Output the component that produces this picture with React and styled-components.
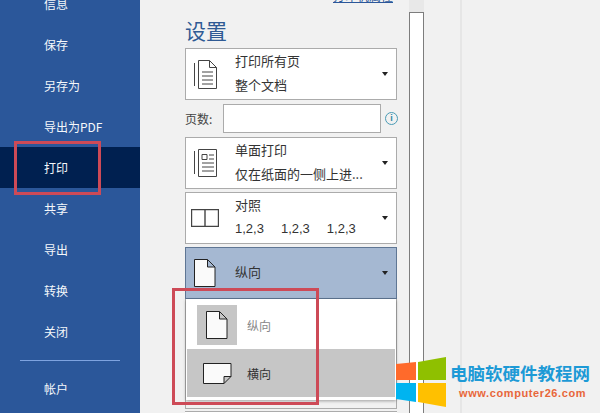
import React from "react";
import styled, { createGlobalStyle } from "styled-components";

const Global = createGlobalStyle`
  html, body { margin: 0; padding: 0; }
  body { width: 600px; height: 413px; overflow: hidden; background: #f1f1f1; }
  * { box-sizing: border-box; }
`;

const Page = styled.div`
  position: relative;
  display: flex;
  width: 600px;
  height: 413px;
  overflow: hidden;
  font-family: "Noto Sans CJK SC", "Liberation Sans", sans-serif;
`;

const Sidebar = styled.nav`
  width: 140px;
  margin-top: -17px;
  flex-shrink: 0;
  height: 430px;
  background: #2b579a;
  color: #f4f7fb;
`;

const NavItem = styled.div`
  height: 41px;
  padding-left: 44px;
  display: flex;
  align-items: center;
  font-size: 12px;
  background: ${(p) => (p.$active ? "#002050" : "transparent")};
`;

const NavDivider = styled.div`
  height: 1px;
  background: #7ea3e0;
  margin: 8px 20px 7px;
`;

const Settings = styled.section`
  width: 271px;
  padding: 17px 0 0 45px;
  flex-shrink: 0;
`;

const Heading = styled.h2`
  margin: 0 0 5px;
  font-size: 21px;
  line-height: 26px;
  font-weight: 400;
  color: #2f5a94;
`;

const Select = styled.div`
  width: 212px;
  height: 52px;
  margin-bottom: 3px;
  display: flex;
  align-items: center;
  border: 1px solid #ababab;
  background: ${(p) => (p.$open ? "#a5b8d2" : "#fff")};
  border-color: ${(p) => (p.$open ? "#5f7694" : "#ababab")};
`;

const IconSlot = styled.div`
  width: 38px;
  margin-right: 11px;
  display: flex;
  justify-content: center;
  flex-shrink: 0;
`;

const SelectText = styled.div`
  flex: 1;
  padding-bottom: 3px;
  font-size: 13px;
  line-height: 24px;
  color: #333;
`;

const Numbers = styled.div`
  display: flex;
  gap: 17px;
  font-family: "Liberation Sans", sans-serif;
`;

const Caret = styled.div`
  width: 0;
  height: 0;
  margin-right: 8px;
  border-left: 3.5px solid transparent;
  border-right: 3.5px solid transparent;
  border-top: 4px solid #222;
`;

const PagesRow = styled.div`
  height: 30px;
  padding-top: 1px;
  margin-bottom: 4px;
  display: flex;
  align-items: center;
  font-size: 12px;
  color: #444;
`;

const PagesLabel = styled.span`
  width: 38px;
`;

const PagesInput = styled.div`
  width: 158px;
  height: 29px;
  background: #fff;
  border: 1px solid #ababab;
`;

const InfoIcon = styled.div`
  width: 13px;
  height: 13px;
  margin-left: 4px;
  border: 1px solid #4a9bb5;
  border-radius: 50%;
  color: #2f86a5;
  font: 700 9px/11px "Liberation Sans", sans-serif;
  text-align: center;
`;

const BehindSelect = styled.div`
  position: absolute;
  left: 185px;
  top: 299px;
  width: 212px;
  height: 110px;
  border: 1px solid #ababab;
`;

const Menu = styled.div`
  position: absolute;
  left: 186px;
  top: 299px;
  width: 210px;
  height: 101px;
  padding: 0 1px;
  background: #fff;
  box-shadow: 0 1px 3px rgba(0, 0, 0, 0.35);
`;

const MenuRow = styled.div`
  height: ${(p) => (p.$selected ? "50px" : "48px")};
  padding-top: ${(p) => (p.$selected ? "2px" : "0")};
  display: flex;
  align-items: center;
  font-size: 12px;
  color: ${(p) => (p.$selected ? "#888" : "#333")};
  background: ${(p) => (p.$hover ? "#c6c6c6" : "#fff")};
`;

const MenuIcon = styled.div`
  width: 40px;
  height: 40px;
  margin: 0 10px;
  display: flex;
  align-items: center;
  justify-content: center;
  background: ${(p) => (p.$selected ? "#c6c6c6" : "transparent")};
`;

const NextSelect = styled.div`
  position: absolute;
  left: 185px;
  top: 411px;
  width: 212px;
  height: 2px;
  border-top: 1px solid #ababab;
  background: #fff;
`;

const Preview = styled.div`
  position: absolute;
  left: 409px;
  top: 12px;
  width: 15px;
  height: 401px;
  background: #fff;
  border: 1px solid #7d7d7d;
  border-bottom: 0;
`;

const PreviewCap = styled.div`
  position: absolute;
  left: 409px;
  top: 0;
  width: 15px;
  height: 12px;
  background: #e8e8e8;
`;

const PreviewEdge = styled.div`
  position: absolute;
  left: 460px;
  top: 0;
  width: 2px;
  height: 413px;
  background: #e6e6e6;
`;

const Marker = styled.div`
  position: absolute;
  border: 3px solid #cd4a57;
  left: ${(p) => p.$x}px;
  top: ${(p) => p.$y}px;
  width: ${(p) => p.$w}px;
  height: ${(p) => p.$h}px;
`;

const Watermark = styled.div`
  position: absolute;
  left: 396px;
  top: 357px;
  display: flex;
  gap: 4px;
`;

const WatermarkText = styled.div`
  padding-top: 5px;
`;

const WatermarkTitle = styled.div`
  font-size: 17.5px;
  line-height: 22px;
  font-weight: 700;
  white-space: nowrap;
  color: #1d9ad6;
`;

const WatermarkUrl = styled.div`
  margin: 2px 0 0 9px;
  font: 700 11px/14px "Liberation Sans", sans-serif;
  letter-spacing: 0.6px;
  white-space: nowrap;
  color: #e8663a;
`;

const TopLink = styled.div`
  position: absolute;
  left: 333px;
  top: -11px;
  font-size: 12px;
  line-height: 13px;
  color: #2b579a;
  border-bottom: 1px solid #2b579a;
`;

const stroke = { fill: "none", stroke: "#444", strokeWidth: 1 };

const DocsIcon = () => (
  <svg width="23" height="29" viewBox="0 0 23 29">
    <path {...stroke} d="M.5 3v23M4.5 .5h11l7 7v21h-18zM15.5 .5v7h7M8 12h11M8 16h11M8 20h11M8 24h11" />
  </svg>
);

const DuplexIcon = () => (
  <svg width="23" height="28" viewBox="0 0 23 28">
    <path {...stroke} d="M.5 2v23M4.5 .5h18v27h-18zM8 5.5h5v5H8zM15 6h5M15 10h5M8 14h12M8 18h12M8 22h12" />
  </svg>
);

const CollateIcon = () => (
  <svg width="28" height="18" viewBox="0 0 28 18">
    <path {...stroke} d="M.5.5h27v17H.5zM14 .5v17" strokeWidth="1.4" />
  </svg>
);

const PortraitIcon = ({ fill = "#fafafa" }) => (
  <svg width="22" height="28" viewBox="0 0 22 28">
    <path fill={fill} stroke="#222" d="M.5.5h13l7.5 7.5v19.5H.5zM13.5.5V8H21" />
  </svg>
);

const LandscapeIcon = () => (
  <svg width="29" height="21" viewBox="0 0 29 21">
    <path fill="#fafafa" stroke="#222" d="M.5.5h27.5v13l-7 7H.5zM28 13.5h-7v7" />
  </svg>
);

const navItems = ["信息", "保存", "另存为", "导出为PDF", "打印", "共享", "导出", "转换", "关闭"];

export default function App() {
  return (
    <Page>
      <Global />
      <Sidebar>
        {navItems.map((item) => (
          <NavItem key={item} $active={item === "打印"}>{item}</NavItem>
        ))}
        <NavDivider />
        <NavItem>帐户</NavItem>
      </Sidebar>
      <Settings>
        <Heading>设置</Heading>
        <Select>
          <IconSlot><DocsIcon /></IconSlot>
          <SelectText>打印所有页<br />整个文档</SelectText>
          <Caret />
        </Select>
        <PagesRow>
          <PagesLabel>页数:</PagesLabel>
          <PagesInput />
          <InfoIcon>i</InfoIcon>
        </PagesRow>
        <Select>
          <IconSlot><DuplexIcon /></IconSlot>
          <SelectText>单面打印<br />仅在纸面的一侧上进...</SelectText>
          <Caret />
        </Select>
        <Select>
          <IconSlot><CollateIcon /></IconSlot>
          <SelectText>
            对照
            <Numbers><span>1,2,3</span><span>1,2,3</span><span>1,2,3</span></Numbers>
          </SelectText>
          <Caret />
        </Select>
        <Select $open>
          <IconSlot><PortraitIcon /></IconSlot>
          <SelectText>纵向</SelectText>
          <Caret />
        </Select>
      </Settings>
      <TopLink>打印机属性</TopLink>
      <BehindSelect />
      <Menu>
        <MenuRow $selected>
          <MenuIcon $selected><PortraitIcon /></MenuIcon>
          纵向
        </MenuRow>
        <MenuRow $hover>
          <MenuIcon><LandscapeIcon /></MenuIcon>
          横向
        </MenuRow>
      </Menu>
      <NextSelect />
      <PreviewCap />
      <Preview />
      <PreviewEdge />
      <Marker $x={14} $y={141} $w={87} $h={54} />
      <Marker $x={172} $y={288} $w={147} $h={117} />
      <Watermark>
        <svg width="50" height="50" viewBox="0 0 50 50">
          <path fill="#ff6a2b" d="M0 7L20 5V23H0z" />
          <path fill="#8fc000" d="M22 5L50 0V23H22z" />
          <path fill="#00b4f0" d="M0 26H20V45L0 42z" />
          <path fill="#ffc000" d="M22 26H50V50L22 45z" />
        </svg>
        <WatermarkText>
          <WatermarkTitle>电脑软硬件教程网</WatermarkTitle>
          <WatermarkUrl>www.computer26.com</WatermarkUrl>
        </WatermarkText>
      </Watermark>
    </Page>
  );
}
